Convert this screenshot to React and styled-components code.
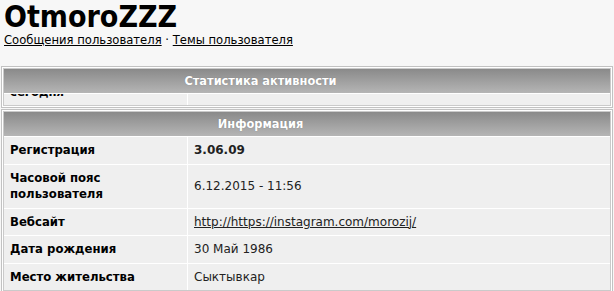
import React from 'react'
import styled, { createGlobalStyle } from 'styled-components'

const GlobalStyle = createGlobalStyle`
  html, body {
    margin: 0;
    padding: 0;
    background: #f7f7f7;
  }

  body {
    font-family: "DejaVu Sans", Verdana, sans-serif;
    font-size: 12px;
    color: #000;
  }
`;

const Page = styled.div`
  padding: 0 1px;
`;

const Title = styled.h1`
  margin: 0 0 0 3px;
  font-family: "DejaVu Sans Condensed", "DejaVu Sans", sans-serif;
  font-stretch: condensed;
  font-size: 30px;
  line-height: 34px;
  font-weight: bold;
`;

const Links = styled.div`
  margin: 0 0 19px 3px;
  font-size: 11.6px;
  line-height: 13px;
`;

const Link = styled.a`
  color: #000;
  text-decoration: underline;
`;

const Panel = styled.div`
  border: 1px solid #c2c2c2;
  padding: 1px;
  background: #fff;
  margin-bottom: 1px;
`;

const Frame = styled.div`
  border: 1px solid #cacaca;
  background: #fff;
  display: flex;
  flex-direction: column;
  gap: 1px;
`;

const Header = styled.div`
  height: 24px;
  display: flex;
  align-items: center;
  justify-content: center;
  padding-right: 93px;
  background: linear-gradient(to bottom, #8a8a8a, #b5b5b5);
  color: #fff;
  font-weight: bold;
  font-size: 11.4px;
  text-shadow: 0 0 1px rgba(0, 0, 0, 0.25);
`;

const Row = styled.div`
  display: grid;
  grid-template-columns: 183px 1fr;
  gap: 1px;
  height: ${p => (p.$clip ? '11px' : 'auto')};
  overflow: hidden;
`;

const Label = styled.div`
  background: #efefef;
  padding: 5px 6px;
  line-height: 16.5px;
  font-size: 11.7px;
  font-weight: bold;
  color: #000;
  display: flex;
  align-items: center;
`;

const LabelText = styled.span`
  max-width: 130px;
`;

const Value = styled.div`
  background: #efefef;
  padding: 5px 6px;
  line-height: 16.5px;
  color: #222;
  font-weight: ${p => (p.$bold ? 'bold' : 'normal')};
  display: flex;
  align-items: center;
`;

const ClipText = styled.span`
  display: block;
  margin-top: -15px;
`;

const ValueLink = styled.a`
  color: #222;
  text-decoration: underline;
`;

const info = [
  { label: 'Регистрация', value: '3.06.09', bold: true },
  { label: 'Часовой пояс пользователя', value: '6.12.2015 - 11:56' },
  { label: 'Вебсайт', value: 'http://https://instagram.com/morozij/', link: true },
  { label: 'Дата рождения', value: '30 Май 1986' },
  { label: 'Место жительства', value: 'Сыктывкар' },
]

const App = () => (
  <Page>
    <GlobalStyle />
    <Title>OtmoroZZZ</Title>
    <Links>
      <Link href="#">Сообщения пользователя</Link> · <Link href="#">Темы пользователя</Link>
    </Links>

    <Panel>
      <Frame>
        <Header>Статистика активности</Header>
        <Row $clip>
          <Label><ClipText>сегодня</ClipText></Label>
          <Value />
        </Row>
      </Frame>
    </Panel>

    <Panel>
      <Frame>
        <Header>Информация</Header>
        {info.map(item => (
          <Row key={item.label}>
            <Label><LabelText>{item.label}</LabelText></Label>
            <Value $bold={item.bold}>
              {item.link ? <ValueLink href="#">{item.value}</ValueLink> : item.value}
            </Value>
          </Row>
        ))}
      </Frame>
    </Panel>
  </Page>
)

export default App
